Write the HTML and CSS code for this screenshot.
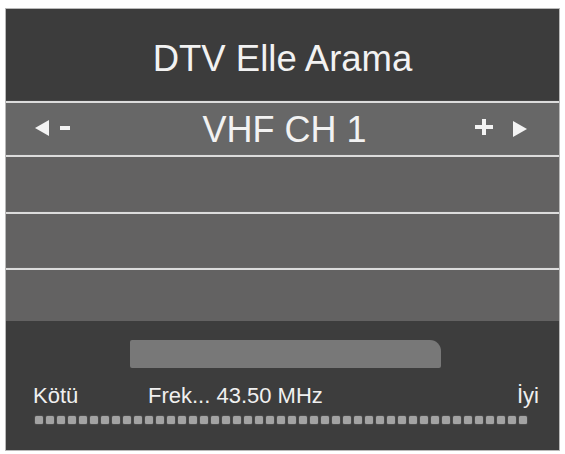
FILE: index.html
```html
<!DOCTYPE html>
<html lang="tr">
<head>
<meta charset="utf-8">
<title>DTV Elle Arama</title>
<link rel="stylesheet" href="styles.css">
</head>
<body>
<div class="frame">
  <div class="title">DTV Elle Arama</div>
  <div class="divider"></div>
  <div class="channel">
    <div class="ctl ctl-left">
      <svg class="tri" width="15" height="16" viewBox="0 0 15 16"><polygon points="14,0 14,16 0,8" fill="#f3f3f3"/></svg>
      <span class="minus"></span>
    </div>
    <div class="ch-name">VHF CH 1</div>
    <div class="ctl ctl-right">
      <svg class="plus" width="18" height="16" viewBox="0 0 18 16"><rect x="0" y="6" width="18" height="4" fill="#f3f3f3"/><rect x="7" y="0" width="4" height="16" fill="#f3f3f3"/></svg>
      <svg class="tri tri-r" width="14" height="16" viewBox="0 0 14 16"><polygon points="0,0 0,16 14,8" fill="#f3f3f3"/></svg>
    </div>
  </div>
  <div class="divider"></div>
  <div class="row row-a"></div>
  <div class="divider"></div>
  <div class="row row-b"></div>
  <div class="divider"></div>
  <div class="row row-c"></div>
  <div class="bottom">
    <div class="bar"></div>
    <div class="labels">
      <span class="lbl-bad">Kötü</span>
      <span class="lbl-freq">Frek... 43.50 MHz</span>
      <span class="lbl-good">İyi</span>
    </div>
    <div class="dots">
      <i></i><i></i><i></i><i></i><i></i><i></i><i></i><i></i><i></i><i></i>
      <i></i><i></i><i></i><i></i><i></i><i></i><i></i><i></i><i></i><i></i>
      <i></i><i></i><i></i><i></i><i></i><i></i><i></i><i></i><i></i><i></i>
      <i></i><i></i><i></i><i></i><i></i><i></i><i></i><i></i><i></i><i></i>
      <i></i><i></i><i></i><i></i><i></i>
    </div>
  </div>
</div>
</body>
</html>
```
FILE: styles.css
```css
html, body {
  margin: 0;
  padding: 0;
  background: #ffffff;
}
body {
  font-family: "Liberation Sans", Arial, sans-serif;
  color: #f2f2f2;
}
.frame {
  margin: 8px 0 0 5px;
  width: 553px;
  height: 441px;
  border: 1px solid #b9b9b9;
  display: flex;
  flex-direction: column;
  background: #3d3d3d;
}
.title {
  height: 92px;
  background: #3c3c3c;
  font-size: 36.5px;
  line-height: 40px;
  display: flex;
  align-items: center;
  justify-content: center;
  padding-top: 8px;
  box-sizing: border-box;
}
.divider {
  height: 2px;
  background: #dcdcdc;
  box-shadow: 0 0 1px #9a9a9a;
}
.channel {
  height: 52px;
  background: #676767;
  display: grid;
  grid-template-columns: 1fr auto 1fr;
  align-items: center;
  padding: 0 32px 0 29px;
}
.ctl {
  display: flex;
  align-items: center;
}
.ctl-left { justify-self: start; margin-top: -2px; }
.ctl-right { justify-self: end; margin-top: -4px; }
.minus {
  display: block;
  width: 10px;
  height: 4px;
  background: #f3f3f3;
  margin-left: 10px;
}
.tri-r { margin-left: 20px; margin-top: 3px; }
.ch-name {
  font-size: 36px;
  line-height: 40px;
  margin-left: 7px;
  padding-top: 2px;
}
.row {
  background: #636262;
}
.row-a { height: 55px; }
.row-b { height: 54px; }
.row-c { height: 51px; }
.bottom {
  height: 129px;
  background: #3d3d3d;
  display: flex;
  flex-direction: column;
}
.bar {
  margin: 19px 0 0 124px;
  width: 311px;
  height: 28px;
  background: #787878;
  border-radius: 2px 11px 2px 2px;
}
.labels {
  margin-top: 15px;
  display: flex;
  font-size: 22px;
  line-height: 25px;
  padding: 0 20px 0 27px;
  color: #f0f0f0;
}
.lbl-bad { width: 115px; }
.lbl-good { margin-left: auto; }
.dots {
  margin: 8px 0 0 29px;
  display: flex;
  gap: 3px;
}
.dots i {
  display: block;
  width: 8px;
  height: 8px;
  background: #a3a3a3;
  border-radius: 1.5px;
  box-shadow: 0 0 1.5px #8a8a8a;
}
```
